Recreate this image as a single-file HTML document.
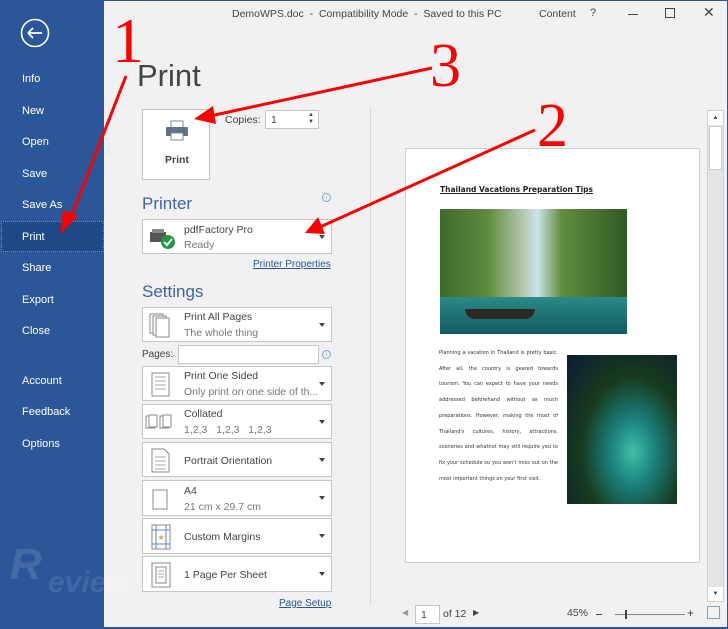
<!DOCTYPE html>
<html><head><meta charset="utf-8"><style>
*{margin:0;padding:0;box-sizing:border-box}
body{width:728px;height:629px;overflow:hidden;background:#f1f1f1;font-family:"Liberation Sans",sans-serif;position:relative;color:#444}
.a{position:absolute}
#side{left:0;top:0;width:104px;height:629px;background:#2b579a}
.si{position:absolute;left:22px;color:#fff;font-size:11px}
.dd{position:absolute;left:142px;width:190px;background:#fff;border:1px solid #c6c6c6}
.dd .t1{position:absolute;left:41px;top:6px;font-size:10.5px;color:#444}
.dd .t2{position:absolute;left:41px;top:21px;font-size:10.5px;color:#777}
.dd .c{position:absolute;left:41px;font-size:10.5px;color:#444}
.dd .ar{position:absolute;right:6px;top:50%;margin-top:-2px;border-left:3px solid transparent;border-right:3px solid transparent;border-top:4px solid #444}
.dd .ic{position:absolute;left:6px;top:5px}
.doc{font-family:"DejaVu Sans",sans-serif;font-size:5px;color:#333;line-height:15.7px;text-align:justify}
.lnk{color:#2b579a;text-decoration:underline;font-size:10px}
</style></head><body>
<div class="a" style="left:0;top:0;width:728px;height:1px;background:#2b579a"></div>
<div class="a" style="left:0;top:627px;width:728px;height:2px;background:#2b579a"></div>
<div class="a" style="left:727px;top:0;width:1px;height:629px;background:#2b579a"></div>
<div id="side" class="a">
 <svg class="a" style="left:20px;top:18px" width="30" height="30"><circle cx="15" cy="15" r="13.5" fill="none" stroke="#fff" stroke-width="1.6"/><path d="M8 15H22M8 15L13 10M8 15L13 20" stroke="#fff" stroke-width="1.8" fill="none"/></svg>
 <div class="si" style="top:73px">Info</div>
 <div class="si" style="top:105px">New</div>
 <div class="si" style="top:136px">Open</div>
 <div class="si" style="top:168px">Save</div>
 <div class="si" style="top:199px">Save As</div>
 <div class="a" style="left:1px;top:221px;width:103px;height:31px;background:#1d4a87;border:1px dotted #6d8fc4"></div>
 <div class="si" style="top:231px">Print</div>
 <div class="si" style="top:262px">Share</div>
 <div class="si" style="top:294px">Export</div>
 <div class="si" style="top:325px">Close</div>
 <div class="si" style="top:375px">Account</div>
 <div class="si" style="top:406px">Feedback</div>
 <div class="si" style="top:438px">Options</div>
 <div class="a" style="left:10px;top:540px;font-size:44px;font-weight:bold;font-style:italic;color:rgba(255,255,255,.12)">R</div>
 <div class="a" style="left:48px;top:566px;font-size:30px;font-weight:bold;font-style:italic;color:rgba(255,255,255,.1)">eview</div>
</div>
<div class="a" style="left:232px;top:8px;font-size:10.5px;color:#444">DemoWPS.doc &nbsp;- &nbsp;Compatibility Mode &nbsp;- &nbsp;Saved to this PC</div>
<div class="a" style="left:539px;top:8px;font-size:10.5px;color:#444">Content</div>
<div class="a" style="left:590px;top:7px;font-size:11px;color:#444">?</div>
<div class="a" style="left:628px;top:14px;width:10px;height:1px;background:#444"></div>
<div class="a" style="left:665px;top:8px;width:10px;height:10px;border:1px solid #444"></div>
<div class="a" style="left:703px;top:4px;font-size:14px;color:#444">✕</div>

<div class="a" style="left:137px;top:58px;font-size:31px;color:#444">Print</div>
<div class="a" style="left:142px;top:109px;width:68px;height:71px;background:#fff;border:1px solid #c6c6c6">
 <svg class="a" style="left:22px;top:10px" width="24" height="22"><rect x="6" y="1" width="12" height="7" fill="#fff" stroke="#7a8a9a"/><rect x="1" y="7" width="22" height="9" rx="1" fill="#5f7184"/><rect x="6" y="13" width="12" height="7" fill="#fff" stroke="#7a8a9a"/></svg>
 <div class="a" style="left:22px;top:44px;font-size:10.5px;font-weight:bold;color:#444">Print</div>
</div>
<div class="a" style="left:225px;top:114px;font-size:10.5px">Copies:</div>
<div class="a" style="left:265px;top:110px;width:54px;height:19px;background:#fff;border:1px solid #c6c6c6;font-size:10.5px;padding:3px 0 0 5px">1<span style="position:absolute;right:4px;top:1px;font-size:6px;line-height:7px">▲<br>▼</span></div>

<div class="a" style="left:142px;top:194px;font-size:17px;color:#3d64a6">Printer</div>
<div class="a" style="left:322px;top:193px;width:9px;height:9px;border:1px solid #7fa0d0;border-radius:50%;font-size:6px;color:#7fa0d0;text-align:center;line-height:8px">i</div>
<div class="dd" style="top:219px;height:35px">
 <svg class="ic" style="top:8px" width="28" height="22"><rect x="1" y="4" width="16" height="10" fill="#555"/><rect x="3" y="1" width="12" height="4" fill="#888"/><circle cx="19" cy="14" r="7" fill="#1f9a3e"/><path d="M15 14l3 3 5-6" stroke="#fff" stroke-width="2" fill="none"/></svg>
 <div class="t1" style="top:4px">pdfFactory Pro</div><div class="t2" style="top:19px">Ready</div><div class="ar"></div>
</div>
<div class="a lnk" style="left:253px;top:259px">Printer Properties</div>

<div class="a" style="left:142px;top:282px;font-size:17px;color:#3d64a6">Settings</div>
<div class="dd" style="top:307px;height:35px">
 <svg class="ic" width="24" height="26"><rect x="1" y="1" width="13" height="19" fill="#fff" stroke="#888"/><rect x="4" y="3" width="13" height="19" fill="#fff" stroke="#888"/><rect x="7" y="5" width="13" height="19" fill="#fff" stroke="#888"/></svg>
 <div class="t1" style="top:3px">Print All Pages</div><div class="t2" style="top:19px">The whole thing</div><div class="ar"></div>
</div>
<div class="a" style="left:142px;top:349px;font-size:10px">Pages:</div>
<div class="a" style="left:178px;top:345px;width:141px;height:19px;background:#fff;border:1px solid #c6c6c6"></div>
<div class="a" style="left:322px;top:350px;width:9px;height:9px;border:1px solid #7fa0d0;border-radius:50%;font-size:6px;color:#7fa0d0;text-align:center;line-height:8px">i</div>
<div class="dd" style="top:366px;height:35px">
 <svg class="ic" width="24" height="26"><rect x="3" y="1" width="17" height="23" fill="#fff" stroke="#888"/><path d="M6 5h11M6 9h11M6 13h11M6 17h11" stroke="#aaa"/></svg>
 <div class="t1" style="top:3px">Print One Sided</div><div class="t2" style="top:19px">Only print on one side of th...</div><div class="ar"></div>
</div>
<div class="dd" style="top:404px;height:35px">
 <svg class="ic" style="left:2px;top:9px" width="30" height="16"><rect x="1" y="2" width="9" height="12" fill="#fff" stroke="#888"/><rect x="4" y="1" width="8" height="12" fill="#fff" stroke="#888"/><rect x="15" y="2" width="9" height="12" fill="#fff" stroke="#888"/><rect x="18" y="1" width="8" height="12" fill="#fff" stroke="#888"/></svg>
 <div class="t1" style="top:3px">Collated</div><div class="t2" style="top:19px">1,2,3 &nbsp;&nbsp;1,2,3 &nbsp;&nbsp;1,2,3</div><div class="ar"></div>
</div>
<div class="dd" style="top:442px;height:35px">
 <svg class="ic" width="24" height="26"><path d="M3 1h12l5 5v18H3z" fill="#fff" stroke="#888"/><path d="M6 9h11M6 13h11M6 17h11M6 21h11" stroke="#aaa"/></svg>
 <div class="c" style="top:12px">Portrait Orientation</div><div class="ar"></div>
</div>
<div class="dd" style="top:480px;height:36px">
 <svg class="ic" style="top:8px" width="24" height="22"><rect x="4" y="1" width="14" height="19" fill="#fff" stroke="#888"/></svg>
 <div class="t1" style="top:4px">A4</div><div class="t2" style="top:20px">21 cm x 29.7 cm</div><div class="ar"></div>
</div>
<div class="dd" style="top:518px;height:36px">
 <svg class="ic" width="24" height="26"><rect x="3" y="1" width="18" height="24" fill="#fff" stroke="#888"/><path d="M7 1v24M17 1v24M3 6h18M3 20h18" stroke="#5b86c5"/><text x="8.5" y="16" font-size="8" fill="#e5a43a">★</text></svg>
 <div class="c" style="top:12px">Custom Margins</div><div class="ar"></div>
</div>
<div class="dd" style="top:556px;height:36px">
 <svg class="ic" width="24" height="26"><rect x="3" y="1" width="18" height="24" fill="#fff" stroke="#888"/><rect x="7" y="5" width="10" height="16" fill="#fff" stroke="#888"/><path d="M9 9h6M9 12h6M9 15h6" stroke="#aaa"/></svg>
 <div class="c" style="top:12px">1 Page Per Sheet</div><div class="ar"></div>
</div>
<div class="a lnk" style="left:279px;top:598px">Page Setup</div>

<div class="a" style="left:370px;top:106px;width:1px;height:500px;background:#d8d8d8"></div>
<div class="a" style="left:405px;top:148px;width:295px;height:415px;background:#fff;border:1px solid #d0d0d0">
 <div class="a" style="left:34px;top:36px;font-family:'DejaVu Sans',sans-serif;font-size:7.5px;font-weight:bold;text-decoration:underline;color:#222">Thailand Vacations Preparation Tips</div>
 <div class="a" style="left:34px;top:60px;width:187px;height:125px;background:linear-gradient(90deg,#3e6a2e 0%,#5d8a3a 25%,#b8c8b0 45%,#cde3ea 52%,#5f8f3b 65%,#2f5a26 100%)">
  <div class="a" style="left:0;top:88px;width:187px;height:37px;background:linear-gradient(#2b8a8a,#135a5e)"></div>
  <div class="a" style="left:25px;top:100px;width:70px;height:10px;background:#2a2a22;border-radius:0 0 20px 20px"></div>
 </div>
 <div class="a doc" style="left:33px;top:197px;width:119px">Planning a vacation in Thailand is pretty basic. After all, the country is geared towards tourism. You can expect to have your needs addressed beforehand without as much preparations. However, making the most of Thailand's cultures, history, attractions, sceneries and whatnot may still require you to fix your schedule so you won't miss out on the most important things on your first visit.</div>
 <div class="a" style="left:161px;top:206px;width:110px;height:149px;background:radial-gradient(ellipse at 60% 65%,#3fc0a8 0%,#1a7f7a 25%,#173a1e 55%,#0b1c34 100%)"></div>
</div>
<div class="a" style="left:707px;top:110px;width:17px;height:492px;background:#e4e4e4;border:1px solid #d0d0d0">
 <div class="a" style="left:0;top:0;width:15px;height:14px;background:#fff;font-size:6px;text-align:center;line-height:14px">▲</div>
 <div class="a" style="left:1px;top:15px;width:13px;height:44px;background:#fff;border:1px solid #ccc"></div>
 <div class="a" style="left:0;top:476px;width:15px;height:14px;background:#fff;font-size:6px;text-align:center;line-height:14px">▼</div>
</div>
<div class="a" style="left:402px;top:608px;font-size:8px;color:#999">◀</div>
<div class="a" style="left:415px;top:605px;width:25px;height:19px;background:#fff;border:1px solid #c6c6c6;font-size:10.5px;padding:3px 0 0 5px">1</div>
<div class="a" style="left:443px;top:608px;font-size:10.5px">of 12</div>
<div class="a" style="left:473px;top:608px;font-size:8px;color:#444">▶</div>
<div class="a" style="left:567px;top:607px;font-size:10.5px">45%</div>
<div class="a" style="left:596px;top:614px;width:6px;height:1px;background:#444"></div>
<div class="a" style="left:615px;top:614px;width:70px;height:1px;background:#888"></div>
<div class="a" style="left:625px;top:610px;width:2px;height:9px;background:#444"></div>
<div class="a" style="left:687px;top:606px;font-size:12px">+</div>
<div class="a" style="left:707px;top:606px;width:13px;height:13px;border:1px solid #7fa0d0"></div>

<svg class="a" style="left:0;top:0" width="728" height="629">
 <g stroke="#f00" stroke-width="3" fill="#f00">
  <line x1="126" y1="76" x2="70" y2="220"/><polygon points="60,234 63,210 78,216" stroke="none"/>
  <line x1="432" y1="68" x2="210" y2="116"/><polygon points="194,119 213,106 216,124" stroke="none"/>
  <line x1="535" y1="130" x2="320" y2="227"/><polygon points="305,233 318,217 325,234" stroke="none"/>
 </g>
 <g fill="#f00" font-family="Liberation Serif,serif">
  <text x="112" y="62" font-size="64">1</text>
  <text x="430" y="86" font-size="62">3</text>
  <text x="537" y="146" font-size="62">2</text>
 </g>
</svg>
</body></html>
